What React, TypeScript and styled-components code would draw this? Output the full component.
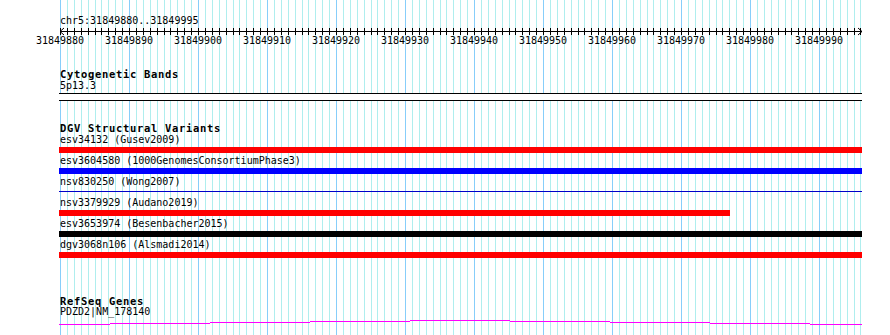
import React from 'react';
import styled, { createGlobalStyle } from 'styled-components';

const START = 31849880;
const SPAN = 116;
const X0 = 60;
const BP = 6.9;
const WIDTH = 890;
const HEIGHT = 335;
const TRACK_LEFT = 59;
const TRACK_RIGHT = 862;

const xOf = (pos: number) => X0 + (pos - START) * BP;
const crisp = (x: number) => Math.round(x) + 0.5;

const GlobalStyle = createGlobalStyle`
  html, body {
    margin: 0;
    padding: 0;
    background: #ffffff;
  }
  body {
    font-family: "DejaVu Sans Mono", "Liberation Mono", monospace;
    color: #000000;
  }
`;

const Browser = styled.div`
  position: relative;
  width: ${WIDTH}px;
  height: ${HEIGHT}px;
  overflow: hidden;
  box-sizing: border-box;
  padding-top: 15px;
  background: #ffffff;
`;

// light vertical guides, one per base, drawn under the tracks
const GridLayer = styled.svg`
  position: absolute;
  top: 0;
  left: 0;
  z-index: 0;
  pointer-events: none;
`;

const Tracks = styled.div`
  position: relative;
  z-index: 1;
  display: flex;
  flex-direction: column;
`;

const Track = styled.section<{ $gap: number }>`
  display: flex;
  flex-direction: column;
  margin-top: ${({ $gap }) => $gap}px;
`;

const RulerTitle = styled.div`
  padding-left: ${X0}px;
  font-size: 10px;
  line-height: 12px;
  height: 12px;
  white-space: pre;
`;

const RulerSvg = styled.svg`
  display: block;
  font-family: "DejaVu Sans Mono", "Liberation Mono", monospace;
  font-size: 10px;
`;

const TrackTitle = styled.div<{ $compact?: boolean }>`
  padding-left: ${X0}px;
  font-size: 10.5px;
  letter-spacing: 0.68px;
  font-weight: bold;
  line-height: ${({ $compact }) => ($compact ? 10 : 12)}px;
  height: ${({ $compact }) => ($compact ? 10 : 12)}px;
  white-space: pre;
`;

const Label = styled.div`
  padding-left: ${X0}px;
  font-size: 10px;
  line-height: 12px;
  height: 12px;
  white-space: pre;
`;

const Band = styled.div`
  margin: 1px 0 0 ${TRACK_LEFT}px;
  width: ${TRACK_RIGHT - TRACK_LEFT}px;
  height: 6px;
  background: #ffffff;
  border-top: 1px solid #000000;
  border-bottom: 1px solid #000000;
`;

const FeatureRow = styled.div`
  display: flex;
  flex-direction: column;
`;

const Bar = styled.div<{ $color: string; $thin?: boolean }>`
  margin-left: ${TRACK_LEFT}px;
  height: ${({ $thin }) => ($thin ? '1px' : '6px')};
  margin-top: ${({ $thin }) => ($thin ? '3px' : '1px')};
  margin-bottom: ${({ $thin }) => ($thin ? '5px' : '2px')};
  background: ${({ $color }) => $color};
`;

const GeneSvg = styled.svg`
  display: block;
`;

function Grid() {
  const lines = [];
  for (let i = 0; i <= SPAN; i++) {
    const x = crisp(X0 + i * BP);
    lines.push(
      <line key={i} x1={x} x2={x} y1={0} y2={HEIGHT} stroke={i % 10 === 0 ? '#87cefa' : '#afeeee'} strokeWidth={1} />
    );
  }
  return (
    <GridLayer width={WIDTH} height={HEIGHT} shapeRendering="crispEdges">
      {lines}
    </GridLayer>
  );
}

function Ruler() {
  const ticks = [];
  for (let i = 0; i <= SPAN; i++) {
    const x = crisp(X0 + i * BP);
    ticks.push(<line key={i} x1={x} x2={x} y1={1} y2={8} stroke="#000" />);
  }
  const labels = [];
  for (let p = START; p < START + SPAN; p += 10) {
    labels.push(
      <text key={p} x={xOf(p)} y={16.5} textAnchor="middle" fill="#000">
        {p}
      </text>
    );
  }
  return (
    <>
      <RulerTitle>chr5:31849880..31849995</RulerTitle>
      <RulerSvg width={WIDTH} height={24}>
        <g shapeRendering="crispEdges">
          <line x1={X0} x2={TRACK_RIGHT} y1={4.5} y2={4.5} stroke="#000" />
          {ticks}
        </g>
        <polyline points={`${X0 + 4},1 ${X0},4.5 ${X0 + 4},8`} fill="none" stroke="#000" />
        <polyline points={`${TRACK_RIGHT - 4},1 ${TRACK_RIGHT},4.5 ${TRACK_RIGHT - 4},8`} fill="none" stroke="#000" />
        {labels}
      </RulerSvg>
    </>
  );
}

const variants = [
  { name: 'esv34132 (Gusev2009)', color: '#ff0000', end: TRACK_RIGHT },
  { name: 'esv3604580 (1000GenomesConsortiumPhase3)', color: '#0000ff', end: TRACK_RIGHT },
  { name: 'nsv830250 (Wong2007)', color: '#0000c8', end: TRACK_RIGHT, thin: true },
  { name: 'nsv3379929 (Audano2019)', color: '#ff0000', end: 730 },
  { name: 'esv3653974 (Besenbacher2015)', color: '#000000', end: TRACK_RIGHT },
  { name: 'dgv3068n106 (Alsmadi2014)', color: '#ff0000', end: TRACK_RIGHT },
];

// intron connector drawn as a shallow stepped arc
const arcSteps = [
  [59, 110, 6],
  [110, 210, 5],
  [210, 310, 4],
  [310, 410, 3],
  [410, 510, 2],
  [510, 610, 3],
  [610, 710, 4],
  [710, 810, 5],
  [810, 862, 6],
];

export default function App() {
  return (
    <>
      <GlobalStyle />
      <Browser>
        <Grid />
        <Tracks>
          <Ruler />

          <Track $gap={17}>
            <TrackTitle>Cytogenetic Bands</TrackTitle>
            <Label>5p13.3</Label>
            <Band />
          </Track>

          <Track $gap={21}>
            <TrackTitle>DGV Structural Variants</TrackTitle>
            {variants.map(v => (
              <FeatureRow key={v.name}>
                <Label>{v.name}</Label>
                <Bar $color={v.color} $thin={v.thin} style={{ width: v.end - TRACK_LEFT }} />
              </FeatureRow>
            ))}
          </Track>

          <Track $gap={36}>
            <TrackTitle $compact>RefSeq Genes</TrackTitle>
            <Label>PDZD2|NM_178140</Label>
            <GeneSvg width={WIDTH} height={17} shapeRendering="crispEdges">
              {arcSteps.map(([a, b, y]) => (
                <rect key={a} x={a} y={y} width={b - a} height={1} fill="#ff00ff" />
              ))}
            </GeneSvg>
          </Track>
        </Tracks>
      </Browser>
    </>
  );
}
